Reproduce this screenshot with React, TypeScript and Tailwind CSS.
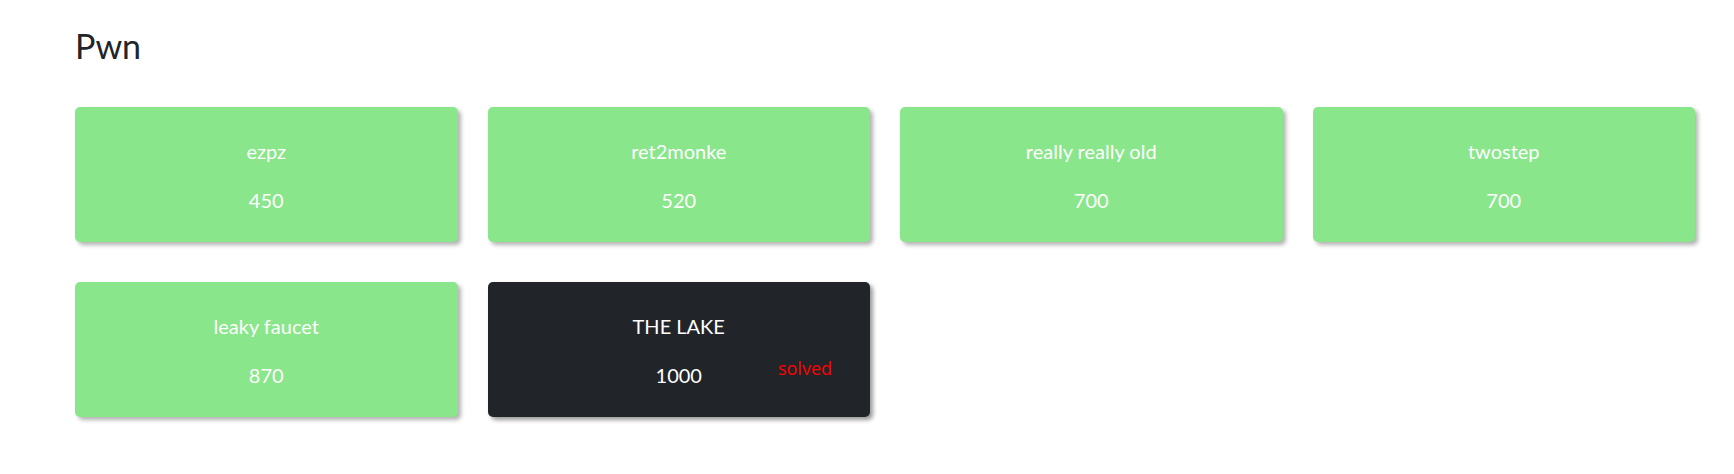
import React from "react";

type Chal = { name: string; points: number; solved?: boolean };

const chals: Chal[] = [
  { name: "ezpz", points: 450 },
  { name: "ret2monke", points: 520 },
  { name: "really really old", points: 700 },
  { name: "twostep", points: 700 },
  { name: "leaky faucet", points: 870 },
  { name: "THE LAKE", points: 1000, solved: true },
];

function Card({ c }: { c: Chal }) {
  return (
    <div
      className={
        c.solved
          ? "relative h-[135px] rounded-[5px] bg-[#212529] text-white shadow-[3px_3px_4px_rgba(0,0,0,0.4)] flex flex-col items-center pt-[32px]"
          : "relative h-[135px] rounded-[5px] bg-[#89e68a] text-white shadow-[3px_3px_4px_rgba(0,0,0,0.3)] flex flex-col items-center pt-[32px]"
      }
    >
      <div className="text-[20px] leading-[24px]">{c.name}</div>
      <div className="mt-[25px] text-[20px] leading-[24px]">{c.points}</div>
      {c.solved && (
        <div className="absolute right-[38px] top-[76px] text-[18px] leading-[20px] text-[#ff0000] font-['Open_Sans',sans-serif]">
          solved
        </div>
      )}
    </div>
  );
}

export default function App() {
  return (
    <div className="min-h-[474px] bg-white font-['Lato',sans-serif] pl-[75px] pr-[39px] pt-[25px]">
      <h2 className="text-[34px] leading-[41px] text-[#212529] font-normal">Pwn</h2>
      <div className="mt-[41px] grid grid-cols-4 gap-x-[30px] gap-y-[40px]">
        {chals.map((c) => (
          <Card key={c.name} c={c} />
        ))}
      </div>
    </div>
  );
}
